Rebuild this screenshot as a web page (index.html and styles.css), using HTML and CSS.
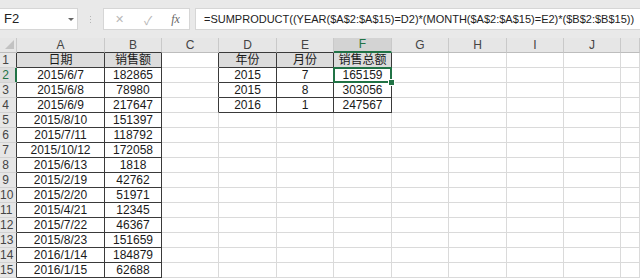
FILE: index.html
```html
<!DOCTYPE html>
<html lang="zh-CN">
<head>
  <meta charset="UTF-8">
  <title>SUMPRODUCT</title>
  <link rel="stylesheet" href="styles.css">
</head>
<body>
  <div class="toolbar">
    <div class="namebox">F2<span class="drop"></span></div>
    <div class="grip"><i></i><i></i><i></i></div>
    <div class="fxbox">
      <span class="btn x">&#x2715;</span>
      <span class="btn ok">&#x2713;</span>
      <span class="fx">fx</span>
    </div>
    <div class="formula">=SUMPRODUCT((YEAR($A$2:$A$15)=D2)*(MONTH($A$2:$A$15)=E2)*($B$2:$B$15))</div>
  </div>

  <div class="sheet">
    <div class="row head">
      <div class="corner"><span class="tri"></span></div>
      <div class="ch hd">A</div><div class="ch hd">B</div><div class="ch">C</div>
      <div class="ch hd">D</div><div class="ch hd">E</div><div class="ch sel">F</div>
      <div class="ch">G</div><div class="ch">H</div><div class="ch">I</div><div class="ch">J</div><div class="ch"></div>
    </div>

    <div class="row">
      <div class="rh">1</div>
      <div class="c t th">日期</div><div class="c t th">销售额</div><div class="c tl"></div>
      <div class="c t th">年份</div><div class="c t th">月份</div><div class="c t th">销售总额</div>
      <div class="c"></div><div class="c"></div><div class="c"></div><div class="c"></div><div class="c"></div>
    </div>
    <div class="row">
      <div class="rh on">2</div>
      <div class="c t">2015/6/7</div><div class="c t">182865</div><div class="c tl"></div>
      <div class="c t">2015</div><div class="c t">7</div><div class="c t active">165159</div>
      <div class="c"></div><div class="c"></div><div class="c"></div><div class="c"></div><div class="c"></div>
    </div>
    <div class="row">
      <div class="rh">3</div>
      <div class="c t">2015/6/8</div><div class="c t">78980</div><div class="c tl"></div>
      <div class="c t">2015</div><div class="c t">8</div><div class="c t">303056</div>
      <div class="c"></div><div class="c"></div><div class="c"></div><div class="c"></div><div class="c"></div>
    </div>
    <div class="row">
      <div class="rh">4</div>
      <div class="c t">2015/6/9</div><div class="c t">217647</div><div class="c tl"></div>
      <div class="c t">2016</div><div class="c t">1</div><div class="c t">247567</div>
      <div class="c"></div><div class="c"></div><div class="c"></div><div class="c"></div><div class="c"></div>
    </div>
    <div class="row">
      <div class="rh">5</div>
      <div class="c t">2015/8/10</div><div class="c t">151397</div><div class="c"></div>
      <div class="c"></div><div class="c"></div><div class="c"></div>
      <div class="c"></div><div class="c"></div><div class="c"></div><div class="c"></div><div class="c"></div>
    </div>
    <div class="row">
      <div class="rh">6</div>
      <div class="c t">2015/7/11</div><div class="c t">118792</div><div class="c"></div>
      <div class="c"></div><div class="c"></div><div class="c"></div>
      <div class="c"></div><div class="c"></div><div class="c"></div><div class="c"></div><div class="c"></div>
    </div>
    <div class="row">
      <div class="rh">7</div>
      <div class="c t">2015/10/12</div><div class="c t">172058</div><div class="c"></div>
      <div class="c"></div><div class="c"></div><div class="c"></div>
      <div class="c"></div><div class="c"></div><div class="c"></div><div class="c"></div><div class="c"></div>
    </div>
    <div class="row">
      <div class="rh">8</div>
      <div class="c t">2015/6/13</div><div class="c t">1818</div><div class="c"></div>
      <div class="c"></div><div class="c"></div><div class="c"></div>
      <div class="c"></div><div class="c"></div><div class="c"></div><div class="c"></div><div class="c"></div>
    </div>
    <div class="row">
      <div class="rh">9</div>
      <div class="c t">2015/2/19</div><div class="c t">42762</div><div class="c"></div>
      <div class="c"></div><div class="c"></div><div class="c"></div>
      <div class="c"></div><div class="c"></div><div class="c"></div><div class="c"></div><div class="c"></div>
    </div>
    <div class="row">
      <div class="rh">10</div>
      <div class="c t">2015/2/20</div><div class="c t">51971</div><div class="c"></div>
      <div class="c"></div><div class="c"></div><div class="c"></div>
      <div class="c"></div><div class="c"></div><div class="c"></div><div class="c"></div><div class="c"></div>
    </div>
    <div class="row">
      <div class="rh">11</div>
      <div class="c t">2015/4/21</div><div class="c t">12345</div><div class="c"></div>
      <div class="c"></div><div class="c"></div><div class="c"></div>
      <div class="c"></div><div class="c"></div><div class="c"></div><div class="c"></div><div class="c"></div>
    </div>
    <div class="row">
      <div class="rh">12</div>
      <div class="c t">2015/7/22</div><div class="c t">46367</div><div class="c"></div>
      <div class="c"></div><div class="c"></div><div class="c"></div>
      <div class="c"></div><div class="c"></div><div class="c"></div><div class="c"></div><div class="c"></div>
    </div>
    <div class="row">
      <div class="rh">13</div>
      <div class="c t">2015/8/23</div><div class="c t">151659</div><div class="c"></div>
      <div class="c"></div><div class="c"></div><div class="c"></div>
      <div class="c"></div><div class="c"></div><div class="c"></div><div class="c"></div><div class="c"></div>
    </div>
    <div class="row">
      <div class="rh">14</div>
      <div class="c t">2016/1/14</div><div class="c t">184879</div><div class="c"></div>
      <div class="c"></div><div class="c"></div><div class="c"></div>
      <div class="c"></div><div class="c"></div><div class="c"></div><div class="c"></div><div class="c"></div>
    </div>
    <div class="row">
      <div class="rh">15</div>
      <div class="c t">2016/1/15</div><div class="c t">62688</div><div class="c"></div>
      <div class="c"></div><div class="c"></div><div class="c"></div>
      <div class="c"></div><div class="c"></div><div class="c"></div><div class="c"></div><div class="c"></div>
    </div>
  </div>
</body>
</html>
```

FILE: styles.css
```css
body {
  margin: 0;
  background: #fff;
  font-family: "Liberation Sans", "Noto Sans CJK SC", sans-serif;
  color: #222;
  overflow: hidden;
}

/* formula bar */
.toolbar {
  display: flex;
  align-items: center;
  height: 38px;
  background: #e9e9e9;
  padding: 0;
  box-sizing: border-box;
}
.namebox {
  position: relative;
  width: 78px;
  height: 22px;
  box-sizing: border-box;
  background: #fff;
  border: 1px solid #d6d6d6;
  border-left: none;
  font-size: 13px;
  line-height: 20px;
  padding-left: 4px;
  color: #222;
}
.drop {
  position: absolute;
  right: 3px;
  top: 9px;
  border-left: 3px solid transparent;
  border-right: 3px solid transparent;
  border-top: 3px solid #666;
}
.grip {
  width: 25px;
  display: flex;
  flex-direction: column;
  align-items: center;
  gap: 2px;
}
.grip i {
  width: 1px;
  height: 1px;
  background: #b5b5b5;
}
.fxbox {
  width: 87px;
  height: 22px;
  box-sizing: border-box;
  background: #fff;
  border: 1px solid #d6d6d6;
  display: flex;
  align-items: center;
  margin-right: 5px;
}
.btn {
  color: #b8b8b8;
  font-size: 11px;
}
.x { margin-left: 11px; }
.ok { margin-left: 20px; font-size: 12px; }
.fx {
  margin-left: 19px;
  font-family: "Liberation Serif", serif;
  font-style: italic;
  font-size: 12px;
  color: #666;
}
.formula {
  flex: 1;
  height: 22px;
  box-sizing: border-box;
  background: #fff;
  border: 1px solid #d6d6d6;
  border-right: none;
  font-size: 11px;
  line-height: 20px;
  padding-left: 8px;
  white-space: nowrap;
  overflow: hidden;
  color: #222;
}

/* sheet grid */
.sheet {
  display: flex;
  flex-direction: column;
}
.row {
  display: grid;
  grid-template-columns: 17px 88px 57px 57px 58px 57px 58px 57px 58px 57px 57px 1fr;
  height: 15px;
}
.row > div {
  box-sizing: border-box;
  height: 15px;
  font-size: 12px;
  line-height: 14px;
  text-align: center;
  white-space: nowrap;
  overflow: visible;
}
.head > div {
  background: #e6e6e6;
  color: #444;
  border-right: 1px solid #c9c9c9;
  border-bottom: 1px solid #bdbdbd;
}
.corner {
  display: flex;
  align-items: flex-end;
  justify-content: flex-end;
  padding: 0 2px 3px 0;
}
.tri {
  width: 0;
  height: 0;
  border-left: 9px solid transparent;
  border-bottom: 9px solid #c2c2c2;
}
.head > .hd { border-bottom-color: #3a3a3a; }
.head > .sel {
  background: #d3d3d3;
  color: #217346;
  border-bottom: 2px solid #217346;
  line-height: 13px;
}
.rh {
  background: #e6e6e6;
  color: #444;
  border-right: 1px solid #3a3a3a;
  border-bottom: 1px solid #d2d2d2;
  padding-right: 5px;
}
.rh.on {
  color: #217346;
  background: #dcdcdc;
  box-shadow: inset -1px 0 #217346;
  border-right-color: #217346;
}
.c {
  border-right: 1px solid #dadada;
  border-bottom: 1px solid #dadada;
  color: #1a1a1a;
}
.c.t {
  border-right-color: #3a3a3a;
  border-bottom-color: #3a3a3a;
}
.c.tl { border-right-color: #3a3a3a; }
.c.th { background: #dcdcdc; }

.active {
  position: relative;
  z-index: 2;
}
.active::before {
  content: "";
  position: absolute;
  left: -1px;
  top: -1px;
  right: -1px;
  bottom: -1px;
  border: 2px solid #217346;
}
.active::after {
  content: "";
  position: absolute;
  right: -4px;
  bottom: -4px;
  width: 5px;
  height: 5px;
  background: #217346;
  border: 1px solid #fff;
}
```
